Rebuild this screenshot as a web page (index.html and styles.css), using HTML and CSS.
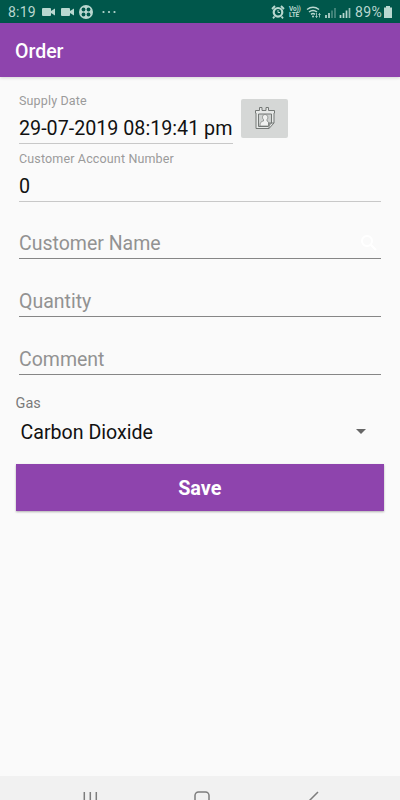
FILE: index.html
```html
<!DOCTYPE html>
<html lang="en">
<head>
  <meta charset="UTF-8">
  <meta name="viewport" content="width=device-width, initial-scale=1.0">
  <title>Order</title>
  <link rel="stylesheet" href="styles.css">
</head>
<body>

  <!-- Status bar -->
  <div class="status-bar">
    <span class="clock">8:19</span>
    <svg class="status-left" width="78" height="23" viewBox="0 0 78 23" fill="#b9d8d0">
      <rect x="2" y="8" width="9" height="8" rx="1"/>
      <path d="M11 11l4-2.5v7L11 13z"/>
      <rect x="21" y="8" width="9" height="8" rx="1"/>
      <path d="M30 11l4-2.5v7L30 13z"/>
      <circle cx="46" cy="12" r="7"/>
      <g fill="#00574b">
        <circle cx="43.5" cy="9.5" r="1.9"/>
        <circle cx="48.5" cy="9.5" r="1.9"/>
        <circle cx="43.5" cy="14.5" r="1.9"/>
        <circle cx="48.5" cy="14.5" r="1.9"/>
      </g>
      <circle cx="63.5" cy="12" r="1.1"/>
      <circle cx="69" cy="12" r="1.1"/>
      <circle cx="74.5" cy="12" r="1.1"/>
    </svg>
    <div class="status-right">
      <svg class="alarm" width="14" height="14" viewBox="0 0 14 14" fill="none" stroke="#b9d8d0">
        <circle cx="7" cy="7.3" r="4.3" stroke-width="2.2"/>
        <path d="M1 4l3-3M13 4l-3-3M3.5 11.5L2 13.3M10.5 11.5l1.5 1.8" stroke-width="1.8"/>
        <path d="M7 5v2.5h2" stroke-width="1"/>
      </svg>
      <div class="volte"><span>Vo))</span><span>LTE</span></div>
      <svg width="46" height="14" viewBox="0 0 46 14" fill="none" stroke="#b9d8d0">
        <path d="M1 4.5q6-4.5 12 0M3 7q4-3 8 0M5 9.4q2-1.6 4 0" stroke-width="1.5"/>
        <circle cx="7" cy="11.5" r="1" fill="#b9d8d0" stroke="none"/>
        <path d="M10.5 8v4.5M9.5 11l1 1.5 1-1.5M13.5 12.5V8.5M12.5 10l1-1.5 1 1.5" stroke-width=".8"/>
        <path d="M20 13v-3M23 13V8" stroke-width="1.7"/>
        <path d="M26 13V5.5M29 13V3" stroke-width="1.7" opacity=".4"/>
        <path d="M34.5 13v-3M37.5 13V8M40.5 13V5.5" stroke-width="1.7"/>
        <path d="M43.5 13V3" stroke-width="1.7" opacity=".8"/>
      </svg>
      <span class="percent">89%</span>
      <svg class="battery" width="8" height="12" viewBox="0 0 8 12" fill="#b9d8d0">
        <path d="M2 0h4v1.500h2V12H0V1.500h2z"/>
      </svg>
    </div>
  </div>

  <header>
    <h1>Order</h1>
  </header>

  <main class="container">
    <!-- Supply Date -->
    <div class="date-row">
      <div class="form-group date-group readonly">
        <div class="label">Supply Date</div>
        <div class="value">29-07-2019 08:19:41 pm</div>
      </div>
      <button type="button" class="date-button" aria-label="Pick date">
        <svg width="22" height="24" viewBox="0 0 22 24" fill="none" stroke="#747876" stroke-width="1">
          <path d="M1.500 4.500H5.500V1.500H8v3h4v-3h2.500v3h6V7H20v10l-5 5.500H2V7h-.500z" fill="#e6e8e7"/>
          <path d="M4.500 8h13v9l-3.500 3.500h-9.500z" fill="#ced1d0"/>
          <path d="M6 20c0-4 1.500-4.500 3.500-5v-1.500c-1.500-1-1.500-5 1.500-5s3.500 4 2 5v1.500l1.500 1v4z" fill="#f0f1f0" stroke-width=".7"/>
          <path d="M15 22.500V17h5"/>
        </svg>
      </button>
    </div>

    <!-- Customer Account Number -->
    <div class="form-group readonly">
      <div class="label">Customer Account Number</div>
      <div class="value">0</div>
    </div>

    <!-- Customer Name -->
    <div class="form-group">
      <div class="value hint">Customer Name</div>
      <svg class="search" width="18" height="18" viewBox="0 0 18 18" fill="none" stroke="#fff" stroke-width="2">
        <circle cx="7" cy="7" r="5"/>
        <path d="M10.500 10.500L16 16"/>
      </svg>
    </div>

    <!-- Quantity -->
    <div class="form-group">
      <div class="value hint">Quantity</div>
    </div>

    <!-- Comment -->
    <div class="form-group">
      <div class="value hint">Comment</div>
    </div>

    <!-- Gas -->
    <div class="gas-label">Gas</div>
    <div class="gas-select">
      <span>Carbon Dioxide</span>
      <svg width="10" height="5" viewBox="0 0 10 5" fill="#666">
        <path d="M0 0h10L5 5z"/>
      </svg>
    </div>

    <button type="button" class="save-button">Save</button>
  </main>

  <!-- Navigation bar -->
  <footer>
    <svg width="400" height="24" viewBox="0 0 400 24" fill="none" stroke="#7d7d7d" stroke-width="1.5">
      <path d="M84.3 16v14M90.3 16v14M96.3 16v14"/>
      <rect x="195" y="16" width="14" height="14" rx="3.5"/>
      <path d="M318 16l-8 8 8 8"/>
    </svg>
  </footer>

</body>
</html>
```

FILE: styles.css
```css
* {
  box-sizing: border-box;
}

body {
  display: flex;
  flex-direction: column;
  height: 800px;
  margin: 0;
  overflow: hidden;
  font-family: Roboto, "Liberation Sans", sans-serif;
  background-color: #fafafa;
}

.status-bar {
  display: flex;
  align-items: center;
  height: 23px;
  padding: 0 8px;
  background-color: #00574b;
  color: #b9d8d0;
}

.clock {
  width: 32px;
  font-size: 14px;
  line-height: 23px;
  padding-top: 1px;
  letter-spacing: 0.2px;
}

.status-right {
  display: flex;
  align-items: center;
  margin-left: auto;
  padding-top: 1px;
}

.volte {
  display: flex;
  flex-direction: column;
  width: 12px;
  margin: 0 5px 0 4px;
  font-size: 6.5px;
  font-weight: bold;
  line-height: 6.5px;
  letter-spacing: -0.2px;
}

.percent {
  margin-left: 3px;
  font-size: 14px;
  letter-spacing: 0.3px;
}

.battery {
  margin-left: 2px;
}

header {
  display: flex;
  align-items: center;
  height: 54px;
  padding: 2px 15px 0;
  background-color: #8e44ad;
  box-shadow: 0 1px 3px rgba(0, 0, 0, 0.15);
}

h1 {
  margin: 0;
  color: white;
  font-size: 19.5px;
  font-weight: 500;
}

.container {
  flex: 1;
  display: flex;
  flex-direction: column;
  padding: 9px 16px 0 15.5px;
}

.form-group {
  display: flex;
  flex-wrap: wrap;
  align-content: flex-end;
  align-items: center;
  justify-content: space-between;
  height: 57.8px;
  margin: 0 3.5px;
  padding-bottom: 3px;
  border-bottom: 1px solid #868686;
}

.readonly {
  border-bottom-color: #c8c8c8;
}

.date-row {
  display: flex;
}

.date-group {
  width: 214px;
  margin-right: 8px;
}

.label {
  width: 100%;
  color: #9b9b9b;
  font-size: 12.5px;
  line-height: 15px;
  letter-spacing: 0.15px;
}

.value {
  color: #111;
  font-size: 19.7px;
  line-height: 22px;
  padding-top: 10px;
  white-space: nowrap;
}

.hint {
  color: #929292;
  font-size: 19.5px;
  padding-top: 0;
}

.search {
  margin: 0 3px 2px 0;
}

.date-button {
  display: flex;
  align-items: center;
  justify-content: center;
  width: 47px;
  height: 39px;
  margin-top: 13px;
  padding: 0 0 2px;
  border: none;
  border-radius: 2px;
  background-color: #d5d7d6;
}

.gas-label {
  margin-top: 20px;
  color: #7a7a7a;
  font-size: 14.5px;
  line-height: 17px;
}

.gas-select {
  display: flex;
  align-items: center;
  justify-content: space-between;
  height: 40px;
  padding: 0 18px 0 5px;
  color: #111;
  font-size: 19.6px;
}

.gas-select span {
  padding-top: 2px;
}

.save-button {
  height: 47px;
  margin-top: 12px;
  padding: 3px 0 0;
  border: none;
  background-color: #8e44ad;
  box-shadow: 0 1px 2px rgba(0, 0, 0, 0.3);
  color: white;
  font-family: inherit;
  font-size: 19.8px;
  font-weight: bold;
}

footer {
  height: 24px;
  background-color: #f1f1f1;
}

footer svg {
  display: block;
}
```
